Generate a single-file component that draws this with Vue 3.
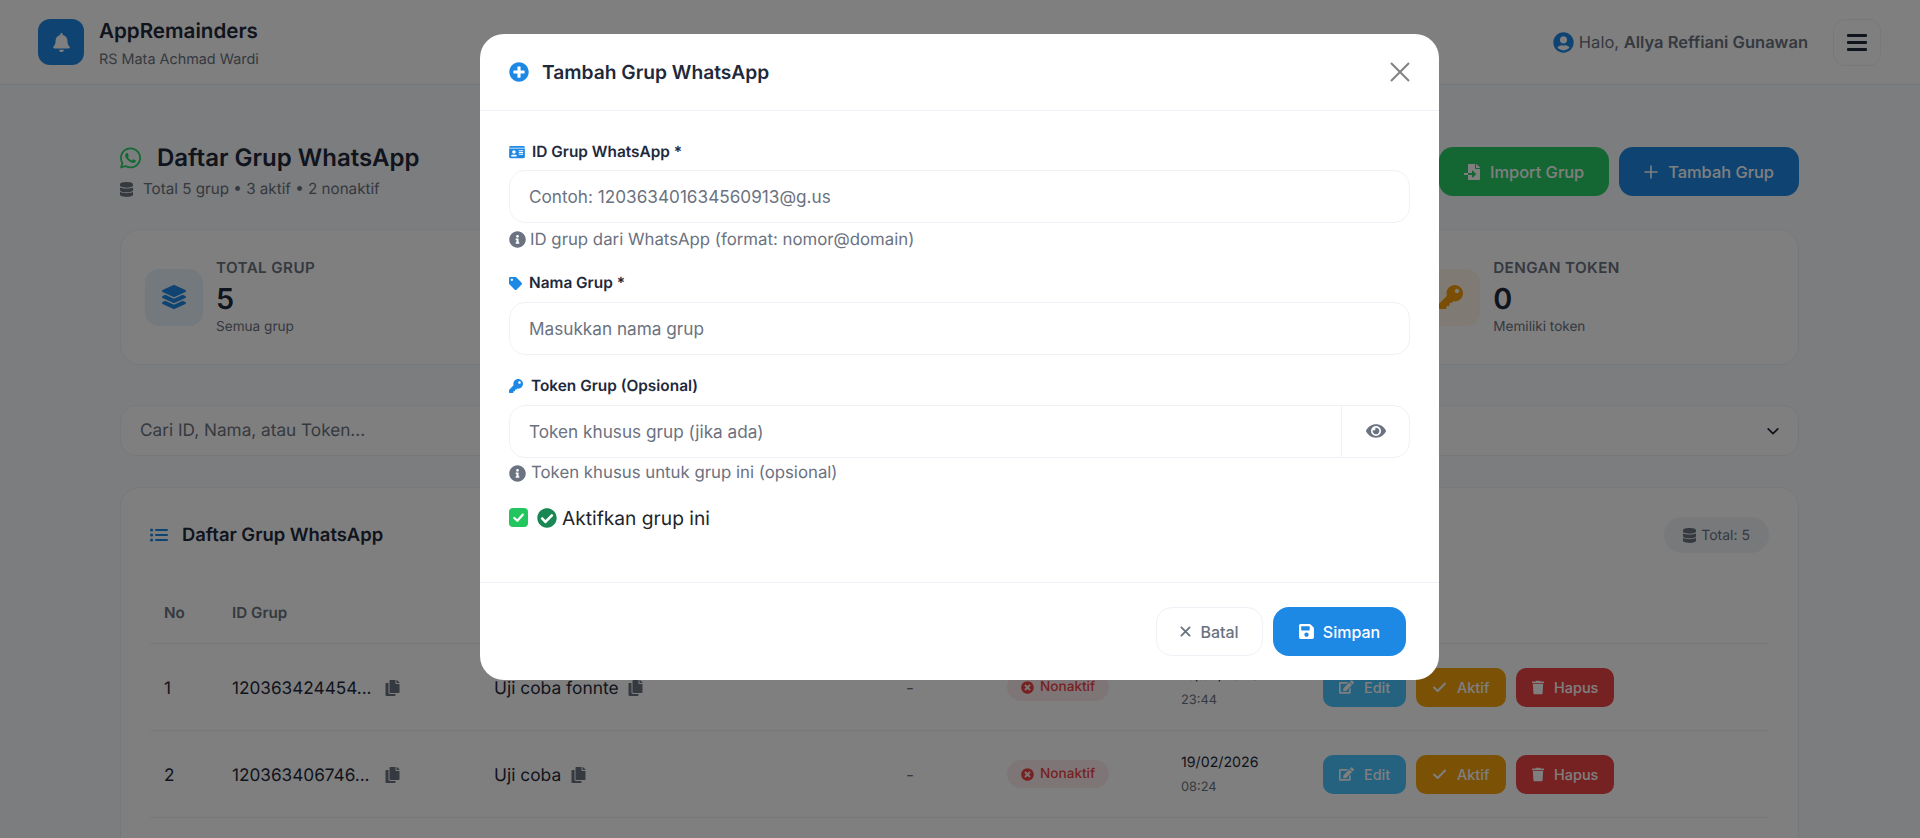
<script setup>
import { h } from 'vue'

const paths = {
  bell: ['0 0 448 512', 'M224 512c35.32 0 63.97-28.65 63.97-64H160.03c0 35.35 28.65 64 63.97 64zm215.39-149.71c-19.32-20.76-55.47-51.99-55.47-154.29 0-77.7-54.48-139.9-127.94-155.16V32c0-17.67-14.32-32-31.98-32s-31.98 14.33-31.98 32v20.84C118.56 68.1 64.08 130.3 64.08 208c0 102.3-36.15 133.53-55.47 154.29-6 6.45-8.66 14.16-8.61 21.71.11 16.4 12.98 32 32.1 32h383.8c19.12 0 32-15.6 32.1-32 .05-7.55-2.61-15.27-8.61-21.71z'],
  whatsapp: ['0 0 448 512', 'M380.9 97.1C339 55.1 283.2 32 223.9 32c-122.4 0-222 99.6-222 222 0 39.1 10.2 77.3 29.6 111L0 480l117.7-30.9c32.4 17.7 68.9 27 106.1 27h.1c122.3 0 224.1-99.6 224.1-222 0-59.3-25.2-115-67.1-157zm-157 341.6c-33.2 0-65.7-8.9-94-25.7l-6.7-4-69.8 18.3L72 359.2l-4.4-7c-18.5-29.4-28.2-63.3-28.2-98.2 0-101.7 82.8-184.5 184.6-184.5 49.3 0 95.6 19.2 130.4 54.1 34.8 34.9 56.2 81.2 56.1 130.5 0 101.8-84.9 184.6-186.6 184.6zm101.2-138.2c-5.5-2.8-32.8-16.2-37.9-18-5.1-1.9-8.8-2.8-12.5 2.8-3.7 5.6-14.3 18-17.6 21.8-3.2 3.7-6.5 4.2-12 1.4-32.6-16.3-54-29.1-75.5-66-5.7-9.8 5.7-9.1 16.3-30.3 1.8-3.7.9-6.9-.5-9.7-1.4-2.8-12.5-30.1-17.1-41.2-4.5-10.8-9.1-9.3-12.5-9.5-3.2-.2-6.9-.2-10.6-.2-3.7 0-9.7 1.4-14.8 6.9-5.1 5.6-19.4 19-19.4 46.3 0 27.3 19.9 53.7 22.6 57.4 2.8 3.7 39.1 59.7 94.8 83.8 35.2 15.2 49 16.5 66.6 13.9 10.7-1.6 32.8-13.4 37.4-26.4 4.6-13 4.6-24.1 3.2-26.4-1.3-2.5-5-3.9-10.5-6.6z'],
  database: ['0 0 448 512', 'M448 73.143v45.714C448 159.143 347.667 192 224 192S0 159.143 0 118.857V73.143C0 32.857 100.333 0 224 0s224 32.857 224 73.143zM448 176v102.857C448 319.143 347.667 352 224 352S0 319.143 0 278.857V176c48.125 33.143 136.208 48.572 224 48.572S399.874 209.143 448 176zm0 160v102.857C448 479.143 347.667 512 224 512S0 479.143 0 438.857V336c48.125 33.143 136.208 48.572 224 48.572S399.874 369.143 448 336z'],
  layers: ['0 0 512 512', 'M12.41 148.02l232.94 105.67c6.8 3.09 14.49 3.09 21.29 0l232.94-105.67c16.55-7.51 16.55-32.52 0-40.03L266.65 2.31a25.607 25.607 0 0 0-21.29 0L12.41 107.98c-16.55 7.51-16.55 32.53 0 40.04zm487.18 88.28l-58.09-26.33-161.64 73.27c-7.56 3.43-15.59 5.17-23.86 5.17s-16.29-1.74-23.86-5.17L70.51 209.97l-58.1 26.33c-16.55 7.5-16.55 32.5 0 40l232.94 105.59c6.8 3.08 14.49 3.08 21.29 0L499.59 276.3c16.55-7.5 16.55-32.5 0-40zm0 127.8l-57.87-26.23-161.86 73.37c-7.56 3.43-15.59 5.17-23.86 5.17s-16.29-1.74-23.86-5.17L70.29 337.87 12.41 364.1c-16.55 7.5-16.55 32.5 0 40l232.94 105.59c6.8 3.08 14.49 3.08 21.29 0L499.59 404.1c16.55-7.5 16.55-32.5 0-40z'],
  key: ['0 0 512 512', 'M512 176.001C512 273.203 433.202 352 336 352c-11.22 0-22.19-1.062-32.827-3.069l-24.012 27.014A23.999 23.999 0 0 1 261.223 384H224v40c0 13.255-10.745 24-24 24h-40v40c0 13.255-10.745 24-24 24H24c-13.255 0-24-10.745-24-24v-78.059c0-6.365 2.529-12.47 7.029-16.971l161.802-161.802C163.108 213.814 160 195.271 160 176 160 78.798 238.797.001 335.999 0 433.488-.001 512 78.511 512 176.001zM336 128c0 26.51 21.49 48 48 48s48-21.49 48-48-21.49-48-48-48-48 21.49-48 48z'],
  tag: ['0 0 512 512', 'M0 252.118V48C0 21.49 21.49 0 48 0h204.118a48 48 0 0 1 33.941 14.059l211.882 211.882c18.745 18.745 18.745 49.137 0 67.882L293.823 497.941c-18.745 18.745-49.137 18.745-67.882 0L14.059 286.059A48 48 0 0 1 0 252.118zM112 64c-26.51 0-48 21.49-48 48s21.49 48 48 48 48-21.49 48-48-21.49-48-48-48z'],
  idcard: ['0 0 576 512', 'M528 32H48C21.5 32 0 53.5 0 80v16h576V80c0-26.5-21.5-48-48-48zM0 432c0 26.5 21.5 48 48 48h480c26.5 0 48-21.5 48-48V128H0v304zm352-232c0-4.4 3.6-8 8-8h144c4.4 0 8 3.6 8 8v16c0 4.4-3.6 8-8 8H360c-4.4 0-8-3.6-8-8v-16zm0 64c0-4.4 3.6-8 8-8h144c4.4 0 8 3.6 8 8v16c0 4.4-3.6 8-8 8H360c-4.4 0-8-3.6-8-8v-16zm0 64c0-4.4 3.6-8 8-8h144c4.4 0 8 3.6 8 8v16c0 4.4-3.6 8-8 8H360c-4.4 0-8-3.6-8-8v-16zM176 192c35.3 0 64 28.7 64 64s-28.7 64-64 64-64-28.7-64-64 28.7-64 64-64zM67.1 396.2C75.5 370.5 99.6 352 128 352h8.2c12.3 5.1 25.7 8 39.8 8s27.6-2.9 39.8-8h8.2c28.4 0 52.5 18.5 60.9 44.2 3.2 9.9-5.2 19.8-15.6 19.8H82.7c-10.4 0-18.8-10-15.6-19.8z'],
  eye: ['0 0 576 512', 'M572.52 241.4C518.29 135.59 410.93 64 288 64S57.68 135.64 3.48 241.41a32.35 32.35 0 0 0 0 29.19C57.71 376.41 165.07 448 288 448s230.32-71.64 284.52-177.41a32.35 32.35 0 0 0 0-29.19zM288 400a144 144 0 1 1 144-144 143.93 143.93 0 0 1-144 144zm0-240a95.31 95.31 0 0 0-25.31 3.79 47.85 47.85 0 0 1-66.9 66.9A95.78 95.78 0 1 0 288 160z'],
  save: ['0 0 448 512', 'M433.941 129.941l-83.882-83.882A48 48 0 0 0 316.118 32H48C21.49 32 0 53.49 0 80v352c0 26.51 21.49 48 48 48h352c26.51 0 48-21.49 48-48V163.882a48 48 0 0 0-14.059-33.941zM224 416c-35.346 0-64-28.654-64-64 0-35.346 28.654-64 64-64s64 28.654 64 64c0 35.346-28.654 64-64 64zm96-304.52V212c0 6.627-5.373 12-12 12H76c-6.627 0-12-5.373-12-12V108c0-6.627 5.373-12 12-12h228.52c3.183 0 6.235 1.264 8.485 3.515l3.48 3.48A11.996 11.996 0 0 1 320 111.48z'],
  copy: ['0 0 448 512', 'M320 448v40c0 13.255-10.745 24-24 24H24c-13.255 0-24-10.745-24-24V120c0-13.255 10.745-24 24-24h72v296c0 30.879 25.121 56 56 56h168zm0-344V0H152c-13.255 0-24 10.745-24 24v368c0 13.255 10.745 24 24 24h272c13.255 0 24-10.745 24-24V128H344c-13.2 0-24-10.8-24-24zm120.971-31.029L375.029 7.029A24 24 0 0 0 358.059 0H352v96h96v-6.059a24 24 0 0 0-7.029-16.97z'],
  edit: ['0 0 576 512', 'M402.6 83.2l90.2 90.2c3.8 3.8 3.8 10 0 13.8L274.4 405.6l-92.8 10.3c-12.4 1.4-22.9-9.1-21.5-21.5l10.3-92.8L388.8 83.2c3.8-3.8 10-3.8 13.8 0zm162-22.9l-48.8-48.8c-15.2-15.2-39.9-15.2-55.2 0l-35.4 35.4c-3.8 3.8-3.8 10 0 13.8l90.2 90.2c3.8 3.8 10 3.8 13.8 0l35.4-35.4c15.2-15.3 15.2-40 0-55.2zM384 346.2V448H64V128h229.8c3.2 0 6.2-1.3 8.5-3.5l40-40c7.6-7.6 2.2-20.5-8.5-20.5H48C21.5 64 0 85.5 0 112v352c0 26.5 21.5 48 48 48h352c26.5 0 48-21.5 48-48V306.2c0-10.7-12.9-16-20.5-8.5l-40 40c-2.2 2.3-3.5 5.3-3.5 8.5z'],
  trash: ['0 0 448 512', 'M432 32H312l-9.4-18.7A24 24 0 0 0 281.1 0H166.8a23.72 23.72 0 0 0-21.4 13.3L136 32H16A16 16 0 0 0 0 48v32a16 16 0 0 0 16 16h416a16 16 0 0 0 16-16V48a16 16 0 0 0-16-16zM53.2 467a48 48 0 0 0 47.9 45h245.8a48 48 0 0 0 47.9-45L416 128H32z'],
  fileImport: ['0 0 512 512', 'M16 288c-8.8 0-16 7.2-16 16v32c0 8.8 7.2 16 16 16h112v-64zm489-183L407.1 7c-4.5-4.5-10.6-7-17-7H384v128h128v-6.1c0-6.3-2.5-12.4-7-16.9zm-153 31V0H152c-13.3 0-24 10.7-24 24v264h128v-65.2c0-14.3 17.3-21.4 27.4-11.3L379 308c6.6 6.7 6.6 17.4 0 24l-95.7 96.4c-10.1 10.1-27.4 3-27.4-11.3V352H128v136c0 13.3 10.7 24 24 24h336c13.3 0 24-10.7 24-24V160H376c-13.2 0-24-10.8-24-24z'],
  user: ['0 0 496 512', 'M248 8C111 8 0 119 0 256s111 248 248 248 248-111 248-248S385 8 248 8zm0 96c48.6 0 88 39.4 88 88s-39.4 88-88 88-88-39.4-88-88 39.4-88 88-88zm0 344c-58.7 0-111.3-26.6-146.5-68.2 18.8-35.4 55.6-59.8 98.5-59.8 2.4 0 4.8.4 7.1 1.1 13 4.2 26.6 6.9 40.9 6.9 14.3 0 28-2.7 40.9-6.9 2.3-.7 4.7-1.1 7.1-1.1 42.9 0 79.7 24.4 98.5 59.8C359.3 421.4 306.7 448 248 448z'],
  info: ['0 0 512 512', 'M256 8C119.043 8 8 119.083 8 256c0 136.997 111.043 248 248 248s248-111.003 248-248C504 119.083 392.957 8 256 8zm0 110c23.196 0 42 18.804 42 42s-18.804 42-42 42-42-18.804-42-42 18.804-42 42-42zm56 254c0 6.627-5.373 12-12 12h-88c-6.627 0-12-5.373-12-12v-24c0-6.627 5.373-12 12-12h12v-64h-12c-6.627 0-12-5.373-12-12v-24c0-6.627 5.373-12 12-12h64c6.627 0 12 5.373 12 12v100h12c6.627 0 12 5.373 12 12v24z'],
  plusCircle: ['0 0 512 512', 'M256 8C119 8 8 119 8 256s111 248 248 248 248-111 248-248S393 8 256 8zm144 276c0 6.6-5.4 12-12 12h-92v92c0 6.6-5.4 12-12 12h-56c-6.6 0-12-5.4-12-12v-92h-92c-6.6 0-12-5.4-12-12v-56c0-6.6 5.4-12 12-12h92v-92c0-6.6 5.4-12 12-12h56c6.6 0 12 5.4 12 12v92h92c6.6 0 12 5.4 12 12v56z'],
  checkCircle: ['0 0 512 512', 'M504 256c0 136.967-111.033 248-248 248S8 392.967 8 256 119.033 8 256 8s248 111.033 248 248zM227.314 387.314l184-184c6.248-6.248 6.248-16.379 0-22.627l-22.627-22.627c-6.248-6.249-16.379-6.249-22.628 0L216 308.118l-70.059-70.059c-6.248-6.248-16.379-6.248-22.628 0l-22.627 22.627c-6.248 6.248-6.248 16.379 0 22.627l104 104c6.249 6.249 16.379 6.249 22.628.001z'],
  timesCircle: ['0 0 512 512', 'M256 8C119 8 8 119 8 256s111 248 248 248 248-111 248-248S393 8 256 8zm121.6 313.1c4.7 4.7 4.7 12.3 0 17L338 377.6c-4.7 4.7-12.3 4.7-17 0L256 312l-65.1 65.6c-4.7 4.7-12.3 4.7-17 0L134.4 338c-4.7-4.7-4.7-12.3 0-17l65.6-65-65.6-65.1c-4.7-4.7-4.7-12.3 0-17l39.6-39.6c4.7-4.7 12.3-4.7 17 0l65 65.7 65.1-65.6c4.7-4.7 12.3-4.7 17 0l39.6 39.6c4.7 4.7 4.7 12.3 0 17L312 256l65.6 65.1z']
}

const Icon = (props) => {
  const [vb, d] = paths[props.name]
  return h('svg', { viewBox: vb, fill: 'currentColor', 'aria-hidden': 'true' }, [h('path', { d })])
}
Icon.props = ['name']

const stats = [
  { label: 'Total Grup', value: 5, note: 'Semua grup', icon: 'layers', tone: 'blue' },
  { label: 'Grup Aktif', value: 3, note: 'Sedang aktif', icon: 'checkCircle', tone: 'green' },
  { label: 'Grup Nonaktif', value: 2, note: 'Tidak aktif', icon: 'timesCircle', tone: 'red' },
  { label: 'Dengan Token', value: 0, note: 'Memiliki token', icon: 'key', tone: 'amber' }
]

const rows = [
  { no: 1, id: '120363424454...', name: 'Uji coba fonnte', date: '18/02/2026', time: '23:44' },
  { no: 2, id: '120363406746...', name: 'Uji coba', date: '19/02/2026', time: '08:24' }
]
</script>

<template>
  <div class="page">
    <header class="nav">
      <div class="brand">
        <div class="logo"><Icon name="bell" class="logo-ic" /></div>
        <div class="brand-text">
          <div class="brand-title">AppRemainders</div>
          <div class="brand-sub">RS Mata Achmad Wardi</div>
        </div>
      </div>
      <div class="nav-right">
        <div class="greet">
          <Icon name="user" class="greet-ic" />
          <span>Halo, <strong>Allya Reffiani Gunawan</strong></span>
        </div>
        <button class="menu-btn" type="button" aria-label="Menu">
          <span></span><span></span><span></span>
        </button>
      </div>
    </header>

    <main class="content">
      <section class="head">
        <div>
          <h1 class="page-title"><Icon name="whatsapp" class="wa-ic" />Daftar Grup WhatsApp</h1>
          <p class="page-sub"><Icon name="database" class="db-ic" />Total 5 grup • 3 aktif • 2 nonaktif</p>
        </div>
        <div class="head-actions">
          <button class="btn btn-green" type="button"><Icon name="fileImport" class="btn-ic" />Import Grup</button>
          <button class="btn btn-blue" type="button">
            <svg class="plus-ic" viewBox="0 0 14 14" fill="none" stroke="currentColor" stroke-width="1.6" stroke-linecap="round"><path d="M7 1v12M1 7h12" /></svg>
            Tambah Grup
          </button>
        </div>
      </section>

      <section class="stats">
        <div v-for="s in stats" :key="s.label" class="stat">
          <div class="stat-box" :class="s.tone"><Icon :name="s.icon" class="stat-ic" /></div>
          <div>
            <div class="stat-label">{{ s.label }}</div>
            <div class="stat-value">{{ s.value }}</div>
            <div class="stat-note">{{ s.note }}</div>
          </div>
        </div>
      </section>

      <section class="filter">
        <span class="filter-text">Cari ID, Nama, atau Token...</span>
        <svg class="chev" viewBox="0 0 16 16" fill="none" stroke="currentColor" stroke-width="2" stroke-linecap="round" stroke-linejoin="round"><path d="M2.5 5.5 8 11l5.5-5.5" /></svg>
      </section>

      <section class="table-card">
        <div class="table-top">
          <h2 class="table-title">
            <svg class="list-ic" viewBox="0 0 18 14" fill="currentColor"><circle cx="1.6" cy="2" r="1.6" /><circle cx="1.6" cy="7" r="1.6" /><circle cx="1.6" cy="12" r="1.6" /><rect x="5" y="1" width="13" height="2" rx="1" /><rect x="5" y="6" width="13" height="2" rx="1" /><rect x="5" y="11" width="13" height="2" rx="1" /></svg>
            Daftar Grup WhatsApp
          </h2>
          <span class="total-pill"><Icon name="database" class="pill-ic" />Total: 5</span>
        </div>
        <div class="t-row t-head">
          <div>No</div><div>ID Grup</div><div>Nama Grup</div><div>Token</div><div>Status</div><div>Dibuat</div><div>Aksi</div>
        </div>
        <div v-for="r in rows" :key="r.no" class="t-row t-body">
          <div class="cell-text">{{ r.no }}</div>
          <div class="with-copy cell-text"><span class="id-text">{{ r.id }}</span><Icon name="copy" class="copy-ic" /></div>
          <div class="with-copy name cell-text">{{ r.name }}<Icon name="copy" class="copy-ic" /></div>
          <div class="dash cell-text">-</div>
          <div><span class="status"><Icon name="timesCircle" class="status-ic" />Nonaktif</span></div>
          <div class="date">
            <div>{{ r.date }}</div>
            <div class="time">{{ r.time }}</div>
          </div>
          <div class="acts">
            <button class="act act-edit" type="button"><Icon name="edit" class="ic-edit" />Edit</button>
            <button class="act act-aktif" type="button">
              <svg class="ic-check" viewBox="0 0 14 14" fill="none" stroke="currentColor" stroke-width="2" stroke-linecap="round" stroke-linejoin="round"><path d="M1.5 7.5 5.2 11 12.5 3.5" /></svg>
              Aktif
            </button>
            <button class="act act-del" type="button"><Icon name="trash" class="ic-trash" />Hapus</button>
          </div>
        </div>
      </section>
    </main>

    <div class="overlay">
      <div class="modal">
        <div class="m-head">
          <h3 class="m-title"><Icon name="plusCircle" class="m-title-ic" />Tambah Grup WhatsApp</h3>
          <button class="m-close" type="button" aria-label="Tutup">
            <svg viewBox="0 0 20 20" fill="none" stroke="currentColor" stroke-width="2"><path d="M1 1l18 18M19 1 1 19" /></svg>
          </button>
        </div>
        <div class="m-body">
          <div class="group">
            <label class="lbl"><Icon name="idcard" class="lbl-id" />ID Grup WhatsApp *</label>
            <input class="inp" type="text" placeholder="Contoh: 120363401634560913@g.us" />
            <div class="help"><Icon name="info" class="help-ic" />ID grup dari WhatsApp (format: nomor@domain)</div>
          </div>
          <div class="group">
            <label class="lbl"><Icon name="tag" class="lbl-tag" />Nama Grup *</label>
            <input class="inp" type="text" placeholder="Masukkan nama grup" />
          </div>
          <div class="group">
            <label class="lbl"><Icon name="key" class="lbl-key" />Token Grup (Opsional)</label>
            <div class="inp-group">
              <input class="inp inp-flat" type="text" placeholder="Token khusus grup (jika ada)" />
              <button class="eye-btn" type="button" aria-label="Lihat"><Icon name="eye" class="eye-ic" /></button>
            </div>
            <div class="help help-token"><Icon name="info" class="help-ic" />Token khusus untuk grup ini (opsional)</div>
          </div>
          <div class="check-row">
            <span class="cbx"><svg viewBox="0 0 16 16" fill="none" stroke="#fff" stroke-width="2.4" stroke-linecap="round" stroke-linejoin="round"><path d="M3.5 8.5 6.8 11.5 12.5 5" /></svg></span>
            <Icon name="checkCircle" class="cc-ic" />
            <span>Aktifkan grup ini</span>
          </div>
        </div>
        <div class="m-foot">
          <button class="f-btn f-cancel" type="button">
            <svg class="f-x" viewBox="0 0 12 12" fill="none" stroke="currentColor" stroke-width="2" stroke-linecap="round"><path d="M1.5 1.5l9 9M10.5 1.5l-9 9" /></svg>
            Batal
          </button>
          <button class="f-btn f-save" type="button"><Icon name="save" class="f-ic" />Simpan</button>
        </div>
      </div>
    </div>
  </div>
</template>

<style>
html, body { margin: 0; background: #f8fafc; }
</style>

<style scoped>
* { box-sizing: border-box; }
.page { position: relative; height: 838px; overflow: hidden; background: #f8fafc; font-family: Inter, "Liberation Sans", sans-serif; color: #1e293b; text-rendering: geometricPrecision; }
button { font-family: inherit; }

.nav { height: 85px; background: #fff; border-bottom: 1px solid #e9edf3; display: flex; align-items: center; justify-content: space-between; padding: 0 39px 0 38px; }
.brand { display: flex; align-items: center; gap: 15px; }
.logo { width: 46px; height: 46px; border-radius: 12px; background: #1e88e5; display: flex; align-items: center; justify-content: center; color: #fff; }
.logo-ic { width: 17px; height: 19px; }
.brand-text { padding-top: 4px; }
.brand-title { font-size: 20.6px; font-weight: 600; line-height: 24px; color: #1e293b; }
.brand-sub { font-size: 14.4px; line-height: 20px; margin-top: 7px; color: #6b7280; }
.nav-right { display: flex; align-items: center; gap: 25px; }
.greet { display: flex; align-items: center; gap: 5px; font-size: 16.5px; color: #6b7280; }
.greet strong { font-weight: 600; }
.greet-ic { width: 21px; height: 21px; color: #1e88e5; }
.menu-btn { width: 48px; height: 47px; border: 1px solid #eef1f5; border-radius: 12px; background: transparent; display: flex; flex-direction: column; align-items: center; justify-content: center; gap: 4px; padding: 0; }
.menu-btn span { width: 20px; height: 3px; border-radius: 1px; background: #1e293b; }

.content { width: 1679px; margin: 0 0 0 120px; padding-top: 57px; }
.head { display: flex; justify-content: space-between; align-items: flex-start; height: 87px; }
.page-title { margin: 0; display: flex; align-items: center; font-size: 24px; font-weight: 600; line-height: 32px; }
.wa-ic { width: 21px; height: 24px; color: #25d366; margin-right: 16px; }
.page-sub { margin: 5px 0 0; display: flex; align-items: center; font-size: 15.2px; line-height: 20px; color: #6b7280; }
.db-ic { width: 13px; height: 15px; margin-right: 10px; }
.head-actions { display: flex; gap: 10px; margin-top: 5px; }
.btn { height: 49px; border: 0; border-radius: 14px; color: #fff; font-size: 16.4px; font-weight: 500; display: flex; align-items: center; gap: 10px; padding: 0 25px; }
.btn-ic { width: 16px; height: 16px; }
.plus-ic { width: 14px; height: 14px; }
.btn-green { background: #29cd64; }
.btn-blue { background: #1e88e5; }

.stats { display: grid; grid-template-columns: repeat(4, 1fr); gap: 24px; }
.stat { height: 136px; background: #fff; border: 1px solid #eef1f5; border-radius: 20px; display: flex; align-items: center; padding: 0 24px; gap: 13px; }
.stat-box { width: 58px; height: 57px; border-radius: 14px; display: flex; align-items: center; justify-content: center; }
.stat-box.blue { background: rgba(30,136,229,.1); color: #1e88e5; }
.stat-box.green { background: rgba(37,211,102,.1); color: #25d366; }
.stat-box.red { background: rgba(239,68,68,.1); color: #ef4444; }
.stat-box.amber { background: rgba(245,158,11,.1); color: #f59e0b; }
.stat-ic { width: 24px; height: 24px; }
.stat-label { font-size: 15.2px; font-weight: 600; line-height: 20px; letter-spacing: .4px; text-transform: uppercase; color: #6b7280; }
.stat-value { font-size: 28.8px; font-weight: 600; line-height: 34px; margin: 4px 0 2px; }
.stat-note { font-size: 13.6px; line-height: 18px; color: #6b7280; }

.filter { margin-top: 40px; height: 51px; background: #fff; border: 1px solid #eef1f5; border-radius: 16px; display: flex; align-items: center; justify-content: space-between; padding: 0 18px 0 19px; }
.filter-text { font-size: 17.2px; color: #6b7280; }
.chev { width: 14px; height: 14px; color: #1e293b; }

.table-card { margin-top: 31px; background: #fff; border: 1px solid #eef1f5; border-radius: 20px; padding: 0 29px; height: 600px; }
.table-top { display: flex; align-items: center; justify-content: space-between; height: 94px; }
.table-title { margin: 0; display: flex; align-items: center; font-size: 18.4px; font-weight: 600; }
.list-ic { width: 18px; height: 14px; margin-right: 14px; color: #1e88e5; }
.total-pill { display: flex; align-items: center; gap: 5px; height: 36px; padding: 0 19px; border-radius: 18px; background: #f1f3f6; font-size: 14px; color: #6b7280; }
.pill-ic { width: 13px; height: 15px; }

.t-row { display: grid; grid-template-columns: 68px 262px 412px 101px 174px 142px 1fr; align-items: center; border-bottom: 1px solid #eef1f5; }
.t-row > div { padding-left: 14px; }
.t-head { height: 62px; font-size: 15.2px; font-weight: 600; color: #6b7280; }
.t-body { height: 87px; font-size: 17.2px; }
.cell-text { padding-top: 2px; }
.with-copy { display: flex; align-items: center; }
.id-text { width: 153px; flex: none; }
.name { font-size: 17.4px; gap: 9.5px; }
.copy-ic { width: 15px; height: 16px; color: #6b7280; }
.dash { color: #6b7280; }
.status { display: inline-flex; align-items: center; gap: 6px; height: 28px; padding: 0 14px; border-radius: 14px; background: rgba(239,68,68,.1); color: #ef4444; font-size: 13.6px; font-weight: 500; }
.status-ic { width: 13px; height: 13px; }
.date { font-size: 14.2px; line-height: 25px; padding-top: 2px; }
.time { font-size: 12.8px; color: #6b7280; }
.acts { display: flex; gap: 10px; }
.act { height: 39px; border: 0; border-radius: 10px; color: #fff; font-size: 14.4px; font-weight: 500; display: flex; align-items: center; gap: 10px; padding: 0 16px; }
.ic-edit { width: 15px; height: 14px; }
.ic-check { width: 15px; height: 14px; }
.ic-trash { width: 12px; height: 15px; }
.act-edit { background: #4ac4ff; }
.act-aktif { width: 90px; background: #f5a30a; }
.act-del { background: #ef4444; }

.overlay { position: absolute; inset: 0; background: rgba(0,0,0,.5); }
.modal { width: 959px; margin: 34px 0 0 480px; background: #fff; border-radius: 24px; overflow: hidden; }
.m-head { height: 77px; border-bottom: 1px solid #eef1f5; display: flex; align-items: center; justify-content: space-between; padding: 0 29px; }
.m-title { margin: 0; display: flex; align-items: center; font-size: 19.2px; font-weight: 600; }
.m-title-ic { width: 20px; height: 20px; color: #1e88e5; margin-right: 13px; }
.m-close { width: 20px; height: 20px; padding: 0; border: 0; background: none; color: #808080; }
.m-close svg { display: block; width: 20px; height: 20px; }
.m-body { padding: 29px 29px 0; height: 471px; }
.group { margin-bottom: 20.5px; }
.lbl { display: flex; align-items: center; height: 22px; padding-top: 2px; font-size: 15.4px; font-weight: 600; line-height: 20px; margin-bottom: 8px; }
.group + .group .lbl { padding-top: 0; }
.lbl-id { width: 16px; height: 14px; margin-right: 7px; color: #1e88e5; }
.lbl-tag { width: 13px; height: 13px; margin-right: 7px; color: #1e88e5; }
.lbl-key { width: 14px; height: 14px; margin-right: 8px; color: #1e88e5; }
.inp { display: block; width: 100%; height: 52.5px; border: 1px solid #eef2f7; border-radius: 16px; padding: 0 19px; font-family: inherit; font-size: 17.2px; color: #1e293b; background: #fff; outline: none; }
.inp::placeholder { color: #6b7280; opacity: 1; }
.inp-group { display: flex; height: 52.5px; }
.inp-flat { flex: 1; border-radius: 16px 0 0 16px; }
.eye-btn { width: 69px; border: 1px solid #eef2f7; margin-left: -1px; border-radius: 0 16px 16px 0; background: #fff; display: flex; align-items: center; justify-content: center; padding: 0; }
.eye-ic { width: 20px; height: 18px; color: #6b7280; }
.help { display: flex; align-items: center; gap: 4px; margin-top: 5px; font-size: 16.8px; line-height: 24px; color: #6b7280; }
.help-ic { width: 17px; height: 17px; flex: none; }
.help-token { gap: 5px; margin-top: 3.5px; }
.check-row { display: flex; align-items: center; font-size: 19.2px; color: #212529; margin-top: 3.5px; }
.cbx { width: 19px; height: 19px; border-radius: 4px; background: #22c55e; display: flex; align-items: center; justify-content: center; margin-right: 9px; }
.cbx svg { width: 15px; height: 15px; }
.cc-ic { width: 20px; height: 20px; color: #198754; margin-right: 5px; }
.m-foot { height: 98px; border-top: 1px solid #eef1f5; display: flex; align-items: center; justify-content: flex-end; gap: 10px; padding: 0 33px; }
.f-btn { height: 49px; border-radius: 16px; font-size: 16px; font-weight: 500; display: flex; align-items: center; justify-content: center; gap: 9px; }
.f-cancel { width: 107px; background: #fff; border: 1px solid #eef1f5; color: #6b7280; }
.f-save { width: 133px; background: #1e88e5; border: 0; color: #fff; }
.f-x { width: 11px; height: 11px; }
.f-ic { width: 15px; height: 17px; }
</style>
